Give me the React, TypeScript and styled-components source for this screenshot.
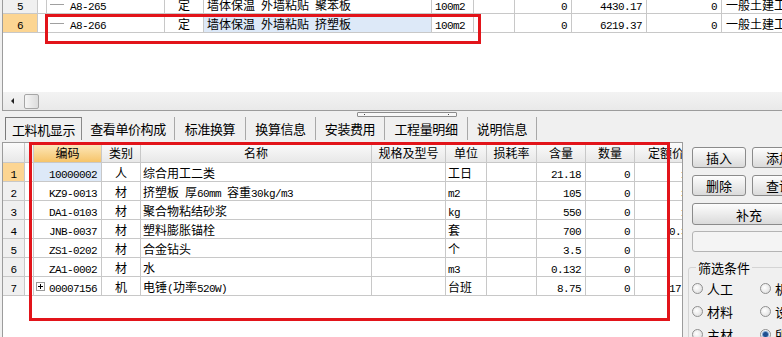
import React from 'react';
import styled, { createGlobalStyle } from 'styled-components';

const CJK = `"Noto Sans CJK SC", "Liberation Sans", sans-serif`;
const MONO = `"Liberation Mono", monospace`;

const GlobalStyle = createGlobalStyle`
  html, body { margin: 0; padding: 0; }
  body {
    width: 782px;
    height: 337px;
    overflow: hidden;
    background: #f0f0f0;
    color: #000;
    font-family: ${CJK};
    font-size: 12px;
  }
`;

type Tone = 'plain' | 'num' | 'numSel' | 'sel' | 'head' | 'headSort';
type Align = 'left' | 'center' | 'right';

const tones: Record<Tone, string> = {
  plain: 'transparent',
  num: '#f0f0f0',
  numSel: '#fcd592',
  sel: '#dde9f8',
  head: 'linear-gradient(#fbfbfb, #e8e8e8)',
  headSort: 'linear-gradient(#fdebc2, #f6c46a)',
};

const Page = styled.div`
  position: relative;
  width: 782px;
  height: 337px;
  display: flex;
  flex-direction: column;
  overflow: hidden;
`;

const TopPane = styled.div`
  box-sizing: border-box;
  height: 111px;
  margin-left: 2px;
  border-left: 1px solid #9c9c9c;
  border-bottom: 1px solid #9c9c9c;
  display: flex;
  flex-direction: column;
`;

const TopGrid = styled.div`
  flex: 1;
  background: #fff;
  overflow: hidden;
`;

const TopRows = styled.div`
  margin-top: -5px;
`;

const Row = styled.div<{ $h: number }>`
  display: flex;
  height: ${p => p.$h}px;
`;

const Cell = styled.div<{ $w: number; $align?: Align; $tone?: Tone; $pl?: number }>`
  flex: none;
  box-sizing: border-box;
  width: ${p => p.$w}px;
  height: 100%;
  padding: 1px 4px 0 ${p => (p.$pl ?? 4)}px;
  border-right: 1px solid #c8c8c8;
  border-bottom: 1px solid #c8c8c8;
  background: ${p => tones[p.$tone || 'plain']};
  display: flex;
  align-items: center;
  justify-content: ${p =>
    p.$align === 'right' ? 'flex-end' : p.$align === 'center' ? 'center' : 'flex-start'};
  white-space: pre;
  overflow: hidden;
  font-family: ${CJK};
  font-size: 12px;
`;

const HeadCell = styled(Cell)`
  padding-top: 0;
`;

const Text = styled.span`
  white-space: pre;
`;

// half-width latin run, SimSun-like 6px advance
const Latin = styled.span`
  font-family: ${MONO};
  font-size: 11px;
  letter-spacing: -0.6px;
`;

const T: React.FC<{ s: string }> = ({ s }) => (
  <Text>
    {s.split(/([\x20-\x7e]+)/).map((part, i) =>
      !part ? null : /[\x20-\x7e]/.test(part[0]) ? <Latin key={i}>{part}</Latin> : part
    )}
  </Text>
);

const TreeLine = styled.span`
  display: inline-block;
  width: 14px;
  height: 1px;
  background: #a0a0a0;
  margin: 0 6px 0 -1px;
`;

const ExpandBox = styled.span`
  width: 7px;
  height: 7px;
  border: 1px solid #9a9a9a;
  background: #fff;
  margin-right: auto;
  margin-left: -2px;
  position: relative;
  &::before,
  &::after {
    content: '';
    position: absolute;
    background: #000;
  }
  &::before { left: 1px; right: 1px; top: 3px; height: 1px; }
  &::after { top: 1px; bottom: 1px; left: 3px; width: 1px; }
`;

const HScroll = styled.div`
  height: 18px;
  display: flex;
  align-items: center;
  background: linear-gradient(#f3f3f3, #e9e9e9);
  padding-left: 8px;
  gap: 6px;
`;

const ScrollArrow = styled.span`
  width: 0;
  height: 0;
  border-top: 3px solid transparent;
  border-bottom: 3px solid transparent;
  border-right: 3px solid #222;
`;

const Thumb = styled.span`
  box-sizing: border-box;
  width: 15px;
  height: 15px;
  margin-left: 4px;
  border: 1px solid #a6a6a6;
  border-radius: 2px;
  background: linear-gradient(90deg, #f6f6f6, #dcdcdc);
`;

const TabBar = styled.div`
  position: relative;
  height: 31px;
  display: flex;
  align-items: flex-start;
  padding: 6px 0 0 5px;
  box-sizing: border-box;
`;

const Tab = styled.div<{ $w: number; $active?: boolean }>`
  box-sizing: border-box;
  width: ${p => p.$w}px;
  height: 23px;
  display: flex;
  align-items: center;
  justify-content: center;
  font-family: ${CJK};
  font-size: 13px;
  letter-spacing: -0.4px;
  border-right: 1px solid #a8a8a8;
  ${p =>
    p.$active
      ? `border: 1px solid #7a7a7a; border-bottom: none; border-right-color: #8a8a8a;`
      : ''}
`;

const Grip = styled.div`
  position: absolute;
  left: 357px;
  top: 1px;
  width: 100px;
  height: 5px;
  box-sizing: border-box;
  border: 1px solid #8c8c8c;
  border-radius: 1px;
  background: #f8f8f8;
  &::before,
  &::after {
    content: '';
    position: absolute;
    top: 1px;
    width: 1px;
    height: 1px;
    background: #444;
  }
  &::before { left: 6px; }
  &::after { right: 7px; }
`;

const BottomPane = styled.div`
  flex: 1;
  display: flex;
  min-height: 0;
`;

const TableWrap = styled.div`
  box-sizing: border-box;
  width: 681px;
  flex: none;
  margin-left: 2px;
  border-left: 1px solid #9c9c9c;
  border-top: 1px solid #9c9c9c;
  border-right: 1px solid #9c9c9c;
  background: #fff;
  overflow: hidden;
`;

const Side = styled.div`
  flex: 1;
  overflow: hidden;
  padding: 5px 0 0 9px;
`;

const SideInner = styled.div`
  width: 114px;
  display: flex;
  flex-direction: column;
`;

const ButtonGrid = styled.div`
  display: grid;
  grid-template-columns: 54px 54px;
  grid-auto-rows: 21px;
  column-gap: 6px;
  row-gap: 7px;
`;

const Btn = styled.button<{ $wide?: boolean }>`
  grid-column: ${p => (p.$wide ? 'span 2' : 'auto')};
  height: ${p => (p.$wide ? '22px' : '21px')};
  padding: 0;
  border: 1px solid #8b8b8b;
  border-radius: 3px;
  background: linear-gradient(#fdfdfd, #ececec 50%, #dadada);
  font-family: ${CJK};
  font-size: 13px;
  color: #000;
`;

const TextBox = styled.div`
  margin-top: 7px;
  height: 21px;
  box-sizing: border-box;
  border: 1px solid #b4b4b4;
  border-radius: 3px;
  background: #f4f4f4;
`;

const Group = styled.fieldset`
  margin: 7px 0 0 -4px;
  padding: 1px 0 0 3px;
  border: 1px solid #d4d4d4;
  border-radius: 3px;
  min-width: 0;
`;

const Legend = styled.legend`
  padding: 0 2px;
  margin-left: 4px;
  font-family: ${CJK};
  font-size: 13px;
  line-height: 17px;
`;

const RadioGrid = styled.div`
  display: grid;
  grid-template-columns: 68px 60px;
  grid-auto-rows: 23px;
`;

const RadioItem = styled.label`
  display: flex;
  align-items: center;
  gap: 4px;
  font-family: ${CJK};
  font-size: 13px;
  white-space: nowrap;
`;

const RadioDot = styled.span<{ $on?: boolean }>`
  box-sizing: border-box;
  width: 11px;
  height: 11px;
  border-radius: 50%;
  border: 1px solid #8f8f8f;
  background: ${p =>
    p.$on
      ? 'radial-gradient(circle, #1f4f8f 0 2px, #7ea3cf 3px, #eef2f6 4px)'
      : 'radial-gradient(circle at 40% 40%, #ffffff, #d8d8d8)'};
`;

const Annot = styled.div<{ $x: number; $y: number; $w: number; $h: number }>`
  position: absolute;
  left: ${p => p.$x}px;
  top: ${p => p.$y}px;
  width: ${p => p.$w}px;
  height: ${p => p.$h}px;
  box-sizing: border-box;
  border: 3px solid #e2141a;
  pointer-events: none;
`;

const topCols = [35, 7, 118, 39, 228, 42, 41, 57, 75, 75, 90];

const topRows = [
  { n: '5', code: 'A8-265', name: '墙体保温 外墙粘贴 聚苯板', price: '4430.17', sel: false },
  { n: '6', code: 'A8-266', name: '墙体保温 外墙粘贴 挤塑板', price: '6219.37', sel: true },
];

const lowCols = [22, 5, 68, 39, 231, 74, 41, 50, 49, 49, 63];

const lowHead = ['', '', '编码', '类别', '名称', '规格及型号', '单位', '损耗率', '含量', '数量', '定额价'];

const lowRows = [
  { code: '10000002', type: '人', name: '综合用工二类', unit: '工日', qty: '21.18', price: '15' },
  { code: 'KZ9-0013', type: '材', name: '挤塑板 厚60mm 容重30kg/m3', unit: 'm2', qty: '105', price: '38' },
  { code: 'DA1-0103', type: '材', name: '聚合物粘结砂浆', unit: 'kg', qty: '550', price: '12' },
  { code: 'JNB-0037', type: '材', name: '塑料膨胀锚栓', unit: '套', qty: '700', price: '0.35' },
  { code: 'ZS1-0202', type: '材', name: '合金钻头', unit: '个', qty: '3.5', price: '8' },
  { code: 'ZA1-0002', type: '材', name: '水', unit: 'm3', qty: '0.132', price: '5' },
  { code: '00007156', type: '机', name: '电锤(功率520W)', unit: '台班', qty: '8.75', price: '17.0', expand: true },
];

const tabs: [string, number][] = [
  ['工料机显示', 77],
  ['查看单价构成', 93],
  ['标准换算', 71],
  ['换算信息', 70],
  ['安装费用', 69],
  ['工程量明细', 83],
  ['说明信息', 69],
];

const App: React.FC = () => {
  return (
    <Page>
      <GlobalStyle />
      <TopPane>
        <TopGrid>
          <TopRows>
            {topRows.map(r => (
              <Row $h={19} key={r.n}>
                <Cell $w={topCols[0]} $align="center" $tone={r.sel ? 'numSel' : 'num'}>
                  <T s={r.n} />
                </Cell>
                <Cell $w={topCols[1]} />
                <Cell $w={topCols[2]}>
                  <TreeLine />
                  <T s={r.code} />
                </Cell>
                <Cell $w={topCols[3]} $align="center">定</Cell>
                <Cell $w={topCols[4]} $tone={r.sel ? 'sel' : 'plain'} $pl={3}>
                  <T s={r.name} />
                </Cell>
                <Cell $w={topCols[5]} $pl={3}><T s="100m2" /></Cell>
                <Cell $w={topCols[6]} />
                <Cell $w={topCols[7]} $align="right"><T s="0" /></Cell>
                <Cell $w={topCols[8]} $align="right"><T s={r.price} /></Cell>
                <Cell $w={topCols[9]} $align="right"><T s="0" /></Cell>
                <Cell $w={topCols[10]}>一般土建工程</Cell>
              </Row>
            ))}
          </TopRows>
        </TopGrid>
        <HScroll>
          <ScrollArrow />
          <Thumb />
        </HScroll>
      </TopPane>

      <TabBar>
        {tabs.map(([label, w], i) => (
          <Tab key={label} $w={w} $active={i === 0}>
            {label}
          </Tab>
        ))}
        <Grip />
      </TabBar>

      <BottomPane>
        <TableWrap>
          <Row $h={20}>
            {lowHead.map((h, i) => (
              <HeadCell key={i} $w={lowCols[i]} $align="center" $tone={i === 2 ? 'headSort' : 'head'}>
                {h}
              </HeadCell>
            ))}
          </Row>
          {lowRows.map((r, i) => (
            <Row $h={19} key={r.code}>
              <Cell $w={lowCols[0]} $align="center" $tone={i === 0 ? 'numSel' : 'num'}>
                <T s={String(i + 1)} />
              </Cell>
              <Cell $w={lowCols[1]} />
              <Cell $w={lowCols[2]} $align="right" $tone={i === 0 ? 'sel' : 'plain'}>
                {r.expand && <ExpandBox />}
                <T s={r.code} />
              </Cell>
              <Cell $w={lowCols[3]} $align="center">{r.type}</Cell>
              <Cell $w={lowCols[4]} $pl={2}><T s={r.name} /></Cell>
              <Cell $w={lowCols[5]} />
              <Cell $w={lowCols[6]} $pl={2}><T s={r.unit} /></Cell>
              <Cell $w={lowCols[7]} />
              <Cell $w={lowCols[8]} $align="right"><T s={r.qty} /></Cell>
              <Cell $w={lowCols[9]} $align="right"><T s="0" /></Cell>
              <Cell $w={lowCols[10]} $align="right"><T s={r.price} /></Cell>
            </Row>
          ))}
        </TableWrap>

        <Side>
          <SideInner>
            <ButtonGrid>
              <Btn>插入</Btn>
              <Btn>添加</Btn>
              <Btn>删除</Btn>
              <Btn>查询</Btn>
              <Btn $wide>补充</Btn>
            </ButtonGrid>
            <TextBox />
            <Group>
              <Legend>筛选条件</Legend>
              <RadioGrid>
                <RadioItem><RadioDot />人工</RadioItem>
                <RadioItem><RadioDot />机械</RadioItem>
                <RadioItem><RadioDot />材料</RadioItem>
                <RadioItem><RadioDot />设备</RadioItem>
                <RadioItem><RadioDot />主材</RadioItem>
                <RadioItem><RadioDot $on />所有</RadioItem>
              </RadioGrid>
            </Group>
          </SideInner>
        </Side>
      </BottomPane>

      <Annot $x={45} $y={14} $w={436} $h={30} />
      <Annot $x={29} $y={142} $w={641} $h={179} />
    </Page>
  );
};

export default App;
